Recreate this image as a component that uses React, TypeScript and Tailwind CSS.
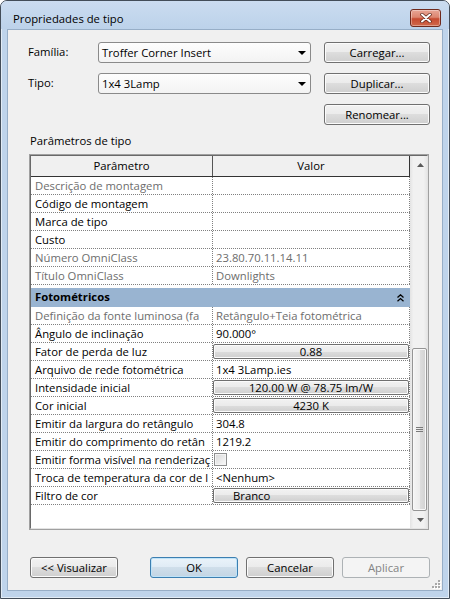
import React from 'react';

type Cell =
  | { kind: 'text'; text: string; gray?: boolean }
  | { kind: 'button'; text: string; left?: boolean }
  | { kind: 'check' }
  | { kind: 'empty' };

interface Param {
  name: string;
  gray?: boolean;
  value: Cell;
}

const identity: Param[] = [
  { name: 'Descrição de montagem', gray: true, value: { kind: 'empty' } },
  { name: 'Código de montagem', value: { kind: 'empty' } },
  { name: 'Marca de tipo', value: { kind: 'empty' } },
  { name: 'Custo', value: { kind: 'empty' } },
  { name: 'Número OmniClass', gray: true, value: { kind: 'text', text: '23.80.70.11.14.11', gray: true } },
  { name: 'Título OmniClass', gray: true, value: { kind: 'text', text: 'Downlights', gray: true } },
];

const photometric: Param[] = [
  { name: 'Definição da fonte luminosa (fa', gray: true, value: { kind: 'text', text: 'Retângulo+Teia fotométrica', gray: true } },
  { name: 'Ângulo de inclinação', value: { kind: 'text', text: '90.000°' } },
  { name: 'Fator de perda de luz', value: { kind: 'button', text: '0.88' } },
  { name: 'Arquivo de rede fotométrica', value: { kind: 'text', text: '1x4 3Lamp.ies' } },
  { name: 'Intensidade inicial', value: { kind: 'button', text: '120.00 W @ 78.75 lm/W' } },
  { name: 'Cor inicial', value: { kind: 'button', text: '4230 K' } },
  { name: 'Emitir da largura do retângulo', value: { kind: 'text', text: '304.8' } },
  { name: 'Emitir do comprimento do retân', value: { kind: 'text', text: '1219.2' } },
  { name: 'Emitir forma visível na renderizaç', value: { kind: 'check' } },
  { name: 'Troca de temperatura da cor de l', value: { kind: 'text', text: '<Nenhum>' } },
  { name: 'Filtro de cor', value: { kind: 'button', text: 'Branco', left: true } },
];

const btnFace =
  'border border-[#707070] bg-[linear-gradient(#f2f2f2_0%,#ebebeb_50%,#dddddd_50%,#cfcfcf_100%)] shadow-[inset_0_0_0_1px_#fbfbfb]';

const WinButton = ({
  children,
  variant = 'normal',
  className = '',
}: {
  children: React.ReactNode;
  variant?: 'normal' | 'default' | 'disabled';
  className?: string;
}) => {
  const look =
    variant === 'default'
      ? 'border border-[#3c7fb1] bg-[linear-gradient(#eaf3fa_0%,#dfebf5_50%,#cfdeea_50%,#c3d5e4_100%)] shadow-[inset_0_0_0_1px_#bfe3f8]'
      : variant === 'disabled'
        ? 'border border-[#adb2b5] bg-[#f4f4f4] text-[#838383]'
        : btnFace;
  return (
    <div className={`flex h-[21px] items-center justify-center rounded-[3px] leading-none ${look} ${className}`}>
      {children}
    </div>
  );
};

const Combo = ({ text }: { text: string }) => (
  <div className="flex h-[21px] w-[213px] items-center rounded-[3px] border border-[#8a8a8a] bg-[linear-gradient(#fdfdfd,#f3f3f3)] pl-[3px]">
    <span className="leading-none">{text}</span>
    <svg className="ml-auto mr-[4px]" width="8" height="4" viewBox="0 0 8 4">
      <path d="M0 0H8L4 4Z" fill="#000" />
    </svg>
  </div>
);

const ValueCell = ({ cell }: { cell: Cell }) => {
  if (cell.kind === 'text')
    return <span className={`pl-[3px] ${cell.gray ? 'text-[#6d6d6d]' : ''}`}>{cell.text}</span>;
  if (cell.kind === 'button')
    return (
      <div
        className={`mt-[1px] flex h-[15px] w-full items-center rounded-[2px] leading-none ${btnFace} ${
          cell.left ? 'pl-[19px]' : 'justify-center'
        }`}
      >
        {cell.text}
      </div>
    );
  if (cell.kind === 'check')
    return (
      <div className="ml-[1px] mt-[2px] h-[13px] w-[13px] border border-[#8e8f8f] bg-[linear-gradient(135deg,#d8d8d8,#fafafa)] shadow-[inset_0_0_0_1px_#f4f4f4]" />
    );
  return null;
};

const ParamRow = ({ p }: { p: Param }) => (
  <div className="flex h-[18px] border-b border-dotted border-[#808080]">
    <div
      className={`w-[182px] overflow-hidden whitespace-nowrap border-r border-dotted border-[#808080] pl-[4px] leading-[17px] ${
        p.gray ? 'text-[#6d6d6d]' : ''
      }`}
    >
      {p.name}
    </div>
    <div className="flex w-[197px] overflow-hidden whitespace-nowrap border-r border-dotted border-[#808080] leading-[17px]">
      <ValueCell cell={p.value} />
    </div>
  </div>
);

const ScrollArrow = ({ down }: { down?: boolean }) => (
  <div className="flex h-[17px] items-center justify-center pl-[4px]">
    <svg width="7" height="4" viewBox="0 0 7 4">
      <path d={down ? 'M0 0H7L3.5 4Z' : 'M3.5 0L7 4H0Z'} fill="#5a5a5a" />
    </svg>
  </div>
);

export default function App() {
  return (
    <div className="flex h-[599px] w-[450px] flex-col rounded-t-[7px] border border-[#434d59] bg-[#bfd4eb] font-['Open_Sans',sans-serif] text-[11.3px] text-black shadow-[inset_0_0_0_1px_rgba(255,255,255,0.55)]">
      {/* Title bar */}
      <div className="flex h-[28px] items-start rounded-t-[6px] bg-[linear-gradient(#cbdcf0,#bcd2ea)]">
        <span className="ml-[12px] mt-[10px] leading-[16px]">Propriedades de tipo</span>
        <div className="ml-auto mr-[8px] mt-[8px] flex h-[18px] w-[31px] items-center justify-center rounded-[3px] border border-[#6f2a1d] bg-[linear-gradient(#e8a595_0%,#dc8670_45%,#c64a30_55%,#d0694b_100%)] shadow-[inset_0_0_0_1px_rgba(255,255,255,0.35)]">
          <svg width="12" height="10" viewBox="0 0 12 10">
            <path d="M2 1.5 10 8.5M10 1.5 2 8.5" stroke="#5a2418" strokeWidth="3.4" strokeLinecap="round" />
            <path d="M2 1.5 10 8.5M10 1.5 2 8.5" stroke="#ffffff" strokeWidth="2" strokeLinecap="round" />
          </svg>
        </div>
      </div>

      {/* Client area */}
      <div className="mx-[6px] flex h-[562px] flex-col border border-[#97aec7] bg-[#f0f0f0]">
        <div className="mt-[12px] flex h-[21px] items-center">
          <span className="w-[90px] pl-[20px]">Família:</span>
          <Combo text="Troffer Corner Insert" />
          <WinButton className="ml-[13px] w-[106px]">Carregar...</WinButton>
        </div>
        <div className="mt-[10px] flex h-[21px] items-center">
          <span className="w-[90px] pl-[20px]">Tipo:</span>
          <Combo text="1x4 3Lamp" />
          <WinButton className="ml-[13px] w-[106px]">Duplicar...</WinButton>
        </div>
        <div className="mt-[10px] flex h-[21px] items-center">
          <WinButton className="ml-[316px] w-[106px]">Renomear...</WinButton>
        </div>

        <div className="ml-[22px] mt-[8px] leading-[16px]">Parâmetros de tipo</div>

        {/* Property grid */}
        <div className="ml-[21px] mt-[5px] h-[376px] w-[400px] border border-[#a0a0a0]">
          <div className="flex h-full border-l border-t border-b border-r border-l-[#696969] border-t-[#696969] border-r-[#e3e3e3] border-b-[#e3e3e3] bg-white">
            <div className="flex w-[379px] flex-col">
              <div className="flex h-[21px] border-b border-[#333333] bg-[#f0f0f0]">
                <div className="w-[182px] border-r border-[#555555] text-center leading-[20px]">Parâmetro</div>
                <div className="w-[197px] border-r border-[#333333] text-center leading-[20px]">Valor</div>
              </div>
              {identity.map((p) => (
                <ParamRow key={p.name} p={p} />
              ))}
              <div className="mt-[3px] flex h-[19px] items-center bg-[#99b4d1] pl-[4px] font-bold">
                <span>Fotométricos</span>
                <svg className="ml-auto mr-[6px]" width="7" height="8" viewBox="0 0 7 8">
                  <path d="M0.5 3.5 3.5 0.8 6.5 3.5M0.5 7.2 3.5 4.5 6.5 7.2" stroke="#000" strokeWidth="1.3" fill="none" />
                </svg>
              </div>
              {photometric.map((p) => (
                <ParamRow key={p.name} p={p} />
              ))}
            </div>

            {/* Scrollbar */}
            <div className="flex w-[17px] flex-col bg-[linear-gradient(90deg,#e3e3e3,#f1f1f1_20%,#f1f1f1_80%,#e6e6e6)]">
              <ScrollArrow />
              <div className="flex-1" />
              <div className="ml-[2px] flex h-[163px] w-[15px] items-center justify-center rounded-[2px] border border-[#959595] bg-[linear-gradient(90deg,#f5f5f5_0%,#ececec_50%,#dedede_50%,#d2d2d2_100%)] shadow-[inset_0_0_0_1px_#f8f8f8]">
                <svg width="7" height="6" viewBox="0 0 7 6">
                  <path d="M0 0.5H7M0 2.5H7M0 4.5H7" stroke="#7a7a7a" strokeWidth="1" />
                </svg>
              </div>
              <ScrollArrow down />
            </div>
          </div>
        </div>

        {/* Bottom buttons */}
        <div className="mt-[27px] flex h-[21px]">
          <WinButton className="ml-[22px] w-[88px]">&lt;&lt; Visualizar</WinButton>
          <WinButton variant="default" className="ml-[32px] w-[88px]">OK</WinButton>
          <WinButton className="ml-[8px] w-[88px]">Cancelar</WinButton>
          <WinButton variant="disabled" className="ml-[8px] w-[88px]">Aplicar</WinButton>
        </div>
        <div className="flex flex-1 items-end justify-end pb-[1px] pr-[1px]">
          <svg width="9" height="9" viewBox="0 0 9 9">
            {[
              [6, 0],
              [3, 3],
              [6, 3],
              [0, 6],
              [3, 6],
              [6, 6],
            ].map(([x, y]) => (
              <g key={`${x}-${y}`}>
                <rect x={x + 1} y={y + 1} width="2" height="2" fill="#ffffff" />
                <rect x={x} y={y} width="2" height="2" fill="#a8a8a8" />
              </g>
            ))}
          </svg>
        </div>
      </div>
    </div>
  );
}
